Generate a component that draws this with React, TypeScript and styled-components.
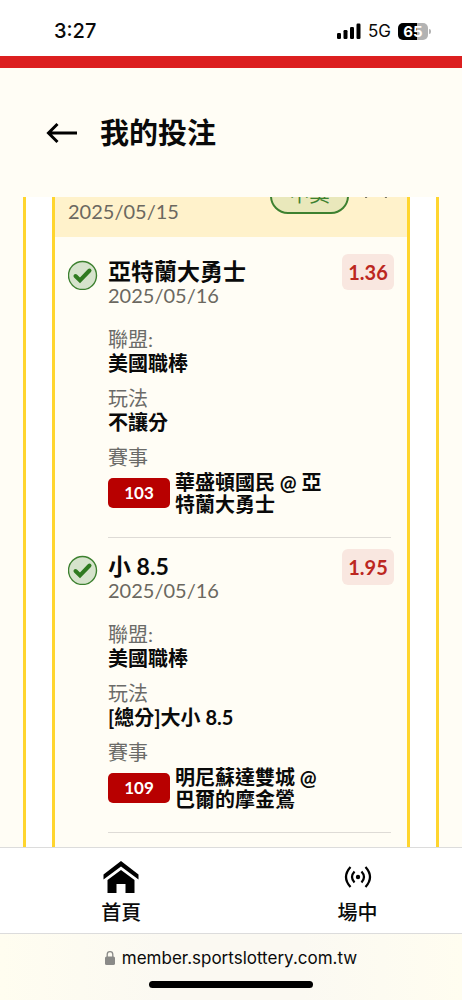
import React from "react";
import styled, { createGlobalStyle } from "styled-components";

const GlobalStyle = createGlobalStyle`
  * { box-sizing: border-box; }
  body {
    margin: 0;
    background: #fffdf5;
    color: #0a0a0a;
    font-family: Lato, "Noto Sans CJK TC", sans-serif;
  }
  button { font: inherit; color: inherit; background: none; border: 0; padding: 0; cursor: pointer; }
`;

const Page = styled.div`
  display: flex;
  flex-direction: column;
  min-height: 100vh;
`;

const StatusBar = styled.div`
  display: flex;
  align-items: center;
  justify-content: space-between;
  height: 56px;
  padding: 6px 31px 0 54px;
  background: #fff;
  font-family: Inter, sans-serif;
`;

const Clock = styled.time`
  font-size: 20px;
  line-height: 24px;
  font-weight: 500;
`;

const StatusIcons = styled.div`
  display: flex;
  align-items: center;
  gap: 7px;
`;

const Network = styled.span`
  font-size: 17px;
  line-height: 24px;
`;

const Battery = styled.span`
  display: flex;
  align-items: center;
  gap: 1px;
`;

const BatteryBody = styled.span`
  width: 30px;
  height: 17px;
  border-radius: 5px;
  background: linear-gradient(90deg, #000 65%, #b3b3b3 65%);
  color: #fff;
  font-size: 15px;
  line-height: 17px;
  font-weight: 700;
  text-align: center;
`;

const BatteryTip = styled.span`
  width: 2px;
  height: 5px;
  border-radius: 0 2px 2px 0;
  background: #b3b3b3;
`;

const BrandStripe = styled.div`
  height: 12px;
  background: #dc1f1f;
`;

const TitleBar = styled.header`
  display: flex;
  align-items: center;
  gap: 23px;
  height: 129px;
  padding: 0 46px;
`;

const IconButton = styled.button`
  display: flex;
`;

const PageTitle = styled.h1`
  margin: 0;
  font-size: 29px;
  line-height: 36px;
  font-weight: 700;
`;

const Ticket = styled.main`
  flex: 1;
  display: flex;
  margin: 0 23px;
  padding: 0 26px;
  background: #fff;
  border: solid #ffd52e;
  border-width: 0 3px;
`;

const Slip = styled.section`
  flex: 1;
  min-width: 0;
  background: #fffdf5;
  border: solid #ffd52e;
  border-width: 0 3px;
`;

const SlipHeader = styled.div`
  display: flex;
  align-items: flex-end;
  justify-content: space-between;
  height: 40px;
  padding: 0 19px 14px 13px;
  overflow: hidden;
  background: #fff2cb;
`;

const DateText = styled.time`
  display: block;
  font-size: 20px;
  line-height: 24px;
  color: #6b6860;
`;

const SlipActions = styled.div`
  display: flex;
  align-items: center;
  gap: 15px;
  margin-bottom: 9px;
`;

const ResultChip = styled.span`
  width: 79px;
  height: 36px;
  border: 2px solid #3d8130;
  border-radius: 18px;
  background: #e9e8bb;
  color: #3d8130;
  font-size: 20px;
  line-height: 28px;
  text-align: center;
`;

const LegList = styled.ul`
  margin: 0;
  padding: 6px 13px 0;
  list-style: none;
`;

const Leg = styled.li`
  display: grid;
  grid-template-columns: 30px 1fr 52px;
  column-gap: 10px;
  align-items: start;
`;

const LegIcon = styled.svg`
  margin-top: 17px;
`;

const LegBody = styled.div`
  padding: 16px 0 22px;
`;

const LegTitle = styled.h2`
  margin: 0;
  font-size: 23px;
  line-height: 24px;
  font-weight: 700;
`;

const Details = styled.dl`
  display: grid;
  gap: 11px;
  margin: 20px 0 0;
`;

const Label = styled.dt`
  font-size: 20px;
  line-height: 24px;
  color: #6b6b68;
`;

const Value = styled.dd`
  margin: 0;
  font-size: 20px;
  line-height: 24px;
  font-weight: 700;
`;

const EventValue = styled(Value)`
  display: flex;
  align-items: center;
  gap: 5px;
  padding-top: 2px;
  line-height: 22px;
`;

const EventCode = styled.span`
  flex: none;
  width: 62px;
  border-radius: 5px;
  background: #b80000;
  color: #fff;
  font-size: 17px;
  line-height: 30px;
  font-weight: 700;
  text-align: center;
`;

const Odds = styled.strong`
  margin-top: 11px;
  border-radius: 6px;
  background: #f9e7e0;
  color: #bc271f;
  font-size: 20px;
  line-height: 36px;
  font-weight: 700;
  text-align: center;
`;

const Divider = styled.hr`
  grid-column: 2 / -1;
  width: auto;
  height: 1px;
  margin: 0 3px 0 0;
  border: 0;
  background: #dedbd6;
  justify-self: stretch;
`;

const TabBar = styled.nav`
  display: flex;
  height: 87px;
  padding-left: 3px;
  overflow: hidden;
  background: #fff;
  border: solid #dcdcdc;
  border-width: 1px 0;
`;

const Tab = styled.button`
  flex: 0 0 51.5%;
  display: flex;
  flex-direction: column;
  align-items: center;
  padding-top: 11px;
  gap: 5px;
`;

const TabIcon = styled.span`
  display: flex;
  align-items: center;
  height: 36px;
`;

const TabLabel = styled.span`
  font-size: 20px;
  line-height: 24px;
  font-weight: 500;
`;

const BrowserBar = styled.footer`
  display: flex;
  flex-direction: column;
  align-items: center;
  height: 66px;
  padding-top: 12px;
  gap: 11px;
  background: linear-gradient(90deg, #fffdf0, #fbf9f2 35%, #fbf9f2 65%, #fffdf0);
  font-family: Inter, sans-serif;
`;

const Address = styled.div`
  display: flex;
  align-items: center;
  gap: 7px;
  font-size: 17px;
  line-height: 24px;
`;

const HomeIndicator = styled.div`
  width: 164px;
  height: 7px;
  border-radius: 4px;
  background: #000;
`;

interface Bet {
  title: string;
  date: string;
  odds: string;
  play: string;
  code: string;
  match: string;
}

const bets: Bet[] = [
  { title: "亞特蘭大勇士", date: "2025/05/16", odds: "1.36", play: "不讓分", code: "103", match: "華盛頓國民 @ 亞特蘭大勇士" },
  { title: "小 8.5", date: "2025/05/16", odds: "1.95", play: "[總分]大小 8.5", code: "109", match: "明尼蘇達雙城 @ 巴爾的摩金鶯" },
];

function BetLeg({ bet }: { bet: Bet }) {
  return (
    <Leg>
      <LegIcon width="30" height="30" viewBox="0 0 30 30" fill="none" aria-label="中獎">
        <circle cx="14.5" cy="15.5" r="14" fill="#d6e3cc" stroke="#3d8130" strokeWidth="1.4" />
        <path d="M7.5 16 L12 20.5 L21.5 10.5" stroke="#2f7a20" strokeWidth="4" strokeLinecap="round" />
      </LegIcon>
      <LegBody>
        <LegTitle>{bet.title}</LegTitle>
        <DateText>{bet.date}</DateText>
        <Details>
          <div>
            <Label>聯盟:</Label>
            <Value>美國職棒</Value>
          </div>
          <div>
            <Label>玩法</Label>
            <Value>{bet.play}</Value>
          </div>
          <div>
            <Label>賽事</Label>
            <EventValue>
              <EventCode>{bet.code}</EventCode>
              <span>{bet.match}</span>
            </EventValue>
          </div>
        </Details>
      </LegBody>
      <Odds>{bet.odds}</Odds>
      <Divider />
    </Leg>
  );
}

export default function App() {
  return (
    <Page>
      <GlobalStyle />
      <StatusBar>
        <Clock>3:27</Clock>
        <StatusIcons>
          <svg width="24" height="16" viewBox="0 0 24 16" aria-hidden="true">
            <rect x="0" y="10" width="4" height="6" rx="1.2" />
            <rect x="6.5" y="7" width="4" height="9" rx="1.2" />
            <rect x="13" y="4" width="4" height="12" rx="1.2" />
            <rect x="19.5" y="0.5" width="4" height="15.5" rx="1.2" />
          </svg>
          <Network>5G</Network>
          <Battery>
            <BatteryBody>65</BatteryBody>
            <BatteryTip />
          </Battery>
        </StatusIcons>
      </StatusBar>
      <BrandStripe />
      <TitleBar>
        <IconButton aria-label="返回">
          <svg width="31" height="22" viewBox="0 0 31 22" fill="none" stroke="#000" strokeWidth="3">
            <path d="M31 11 H3 M11.5 2 L2.5 11 L11.5 20" />
          </svg>
        </IconButton>
        <PageTitle>我的投注</PageTitle>
      </TitleBar>
      <Ticket>
        <Slip>
          <SlipHeader>
            <DateText>2025/05/15</DateText>
            <SlipActions>
              <ResultChip>中獎</ResultChip>
              <IconButton aria-label="收合">
                <svg width="24" height="24" viewBox="0 0 24 24" fill="none" stroke="#5f5c55" strokeWidth="2" strokeLinecap="round">
                  <path d="M2 13 L12 3 L22 13" />
                </svg>
              </IconButton>
            </SlipActions>
          </SlipHeader>
          <LegList>
            {bets.map((bet) => (
              <BetLeg key={bet.code} bet={bet} />
            ))}
          </LegList>
        </Slip>
      </Ticket>
      <TabBar>
        <Tab>
          <TabIcon>
            <svg width="36" height="32" viewBox="0 0 36 32">
              <path d="M18 0 L35.5 13.5 V18.5 L18 5.5 L0.5 18.5 V13.5 Z" />
              <path d="M18 9 L31.5 19 V32 H22.5 V23 H13.5 V32 H4.5 V19 Z" />
            </svg>
          </TabIcon>
          <TabLabel>首頁</TabLabel>
        </Tab>
        <Tab>
          <TabIcon>
            <svg width="28" height="22" viewBox="0 0 28 22" fill="none" stroke="#000" strokeWidth="2.2">
              <circle cx="14" cy="11" r="2.2" fill="#000" stroke="none" />
              <path d="M10.5 5.5 Q5.5 11 10.5 16.5 M17.5 5.5 Q22.5 11 17.5 16.5" />
              <path d="M6.5 1 Q-2.5 11 6.5 21 M21.5 1 Q30.5 11 21.5 21" />
            </svg>
          </TabIcon>
          <TabLabel>場中</TabLabel>
        </Tab>
      </TabBar>
      <BrowserBar>
        <Address>
          <svg width="10" height="14" viewBox="0 0 10 14" aria-hidden="true">
            <rect x="0" y="5.5" width="10" height="8.5" rx="1.6" fill="#8a8a88" />
            <path d="M2.2 6 V3.5 a2.8 2.8 0 0 1 5.6 0 V6" fill="none" stroke="#8a8a88" strokeWidth="1.3" />
          </svg>
          <span>member.sportslottery.com.tw</span>
        </Address>
        <HomeIndicator />
      </BrowserBar>
    </Page>
  );
}
